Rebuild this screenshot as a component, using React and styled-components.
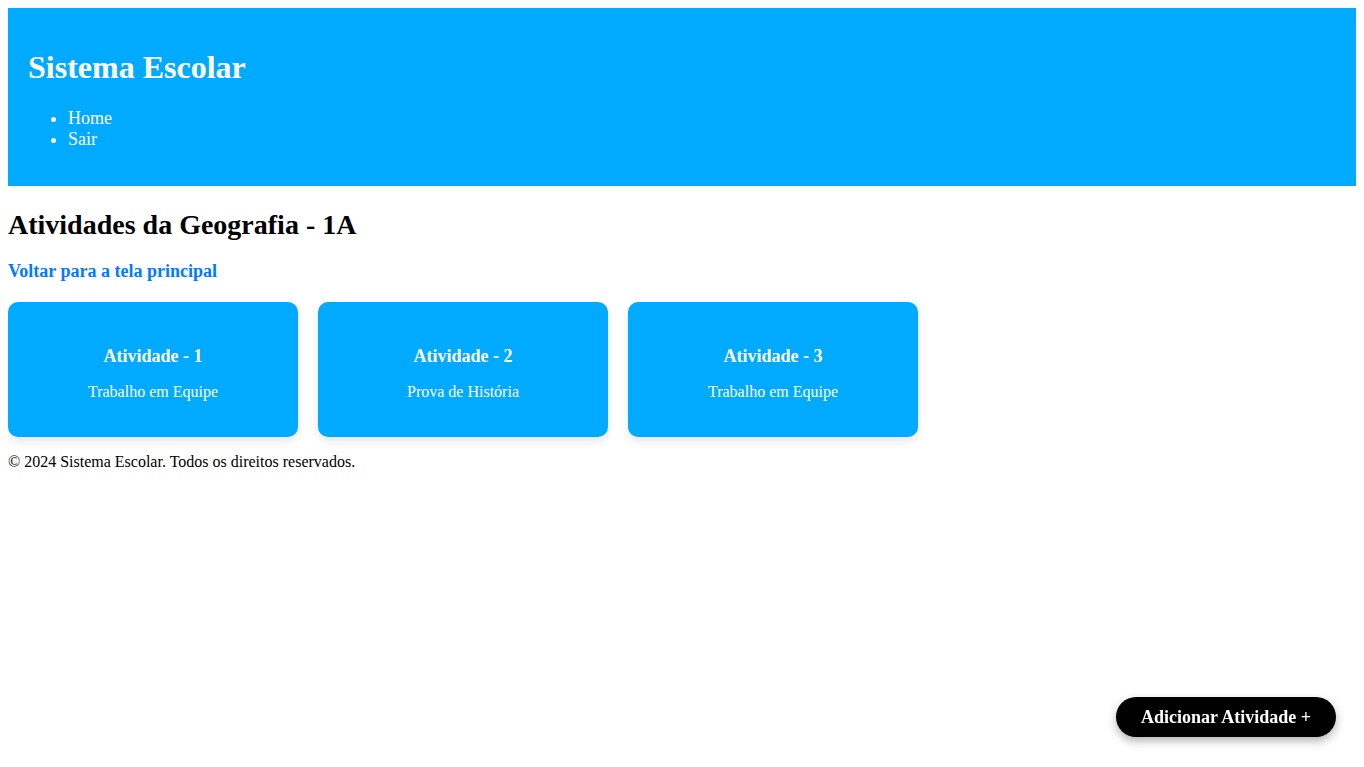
import React from "react";
import styled, { createGlobalStyle } from "styled-components";

const GlobalStyle = createGlobalStyle`
  body {
    margin: 8px;
    font-family: "Liberation Serif", "Times New Roman", serif;
    font-size: 16px;
    color: #000;
    background: #fff;
  }
`;

const Header = styled.header`
  background: #00aaff;
  color: #fff;
  padding: 20px;
  margin-right: -2px;
`;

const Brand = styled.h1`
  font-size: 32px;
  font-weight: bold;
  margin: 21.44px 0;
`;

const NavList = styled.ul`
  font-size: 18px;
  margin: 21.44px 0 16px;
  padding-left: 40px;
  list-style: disc;
`;

const NavItem = styled.li`
  line-height: 21px;
  color: #fff;
`;

const PageTitle = styled.h2`
  font-size: 28px;
  font-weight: bold;
  margin: 23px 0 20px;
`;

const BackLink = styled.a`
  display: block;
  width: max-content;
  font-size: 18px;
  font-weight: bold;
  color: #007bff;
  text-decoration: none;
  margin-bottom: 20.5px;
`;

const CardGrid = styled.div`
  display: flex;
  gap: 20px;
`;

const Card = styled.div`
  width: 290px;
  box-sizing: border-box;
  background: #00aaff;
  color: #fff;
  border-radius: 10px;
  box-shadow: 0 4px 8px rgba(0, 0, 0, 0.1);
  padding: 44px 20px 35.5px;
  text-align: center;
`;

const CardTitle = styled.h3`
  font-size: 18px;
  font-weight: bold;
  margin: 0 0 16px;
`;

const CardText = styled.p`
  font-size: 16px;
  margin: 0;
`;

const Footer = styled.footer`
  margin-top: 16px;
`;

const AddButton = styled.button`
  position: fixed;
  right: 28px;
  bottom: 30px;
  background: #000;
  color: #fff;
  border: none;
  border-radius: 999px;
  padding: 10px 25px;
  font-family: "Liberation Serif", "Times New Roman", serif;
  font-size: 18px;
  font-weight: bold;
  line-height: 20px;
  box-shadow: 0 4px 10px rgba(0, 0, 0, 0.3);
  cursor: pointer;
`;

const activities = [
  { id: 1, title: "Atividade - 1", desc: "Trabalho em Equipe" },
  { id: 2, title: "Atividade - 2", desc: "Prova de História" },
  { id: 3, title: "Atividade - 3", desc: "Trabalho em Equipe" },
];

export default function App() {
  return (
    <>
      <GlobalStyle />
      <Header>
        <Brand>Sistema Escolar</Brand>
        <nav>
          <NavList>
            <NavItem>Home</NavItem>
            <NavItem>Sair</NavItem>
          </NavList>
        </nav>
      </Header>
      <main>
        <PageTitle>Atividades da Geografia - 1A</PageTitle>
        <BackLink href="#">Voltar para a tela principal</BackLink>
        <CardGrid>
          {activities.map((a) => (
            <Card key={a.id}>
              <CardTitle>{a.title}</CardTitle>
              <CardText>{a.desc}</CardText>
            </Card>
          ))}
        </CardGrid>
      </main>
      <Footer>© 2024 Sistema Escolar. Todos os direitos reservados.</Footer>
      <AddButton>Adicionar Atividade +</AddButton>
    </>
  );
}
